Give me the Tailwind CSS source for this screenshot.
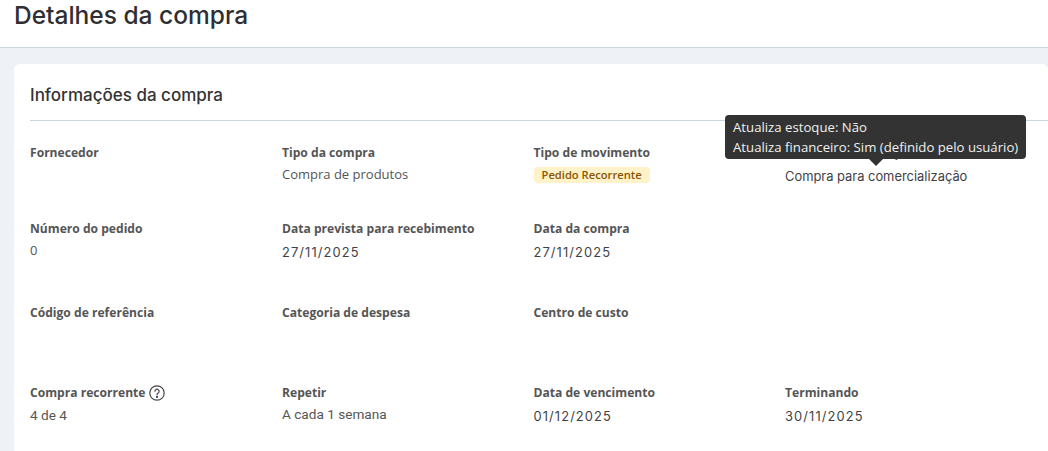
<!DOCTYPE html>
<html lang="pt-BR">
<head>
<meta charset="utf-8">
<title>Detalhes da compra</title>
<script src="https://cdn.jsdelivr.net/npm/@tailwindcss/browser@4"></script>
</head>
<body class="h-[451px] w-[1048px] overflow-hidden bg-[#eef1f6] font-['Open_Sans',sans-serif]">
  <!-- page header -->
  <div class="h-[48px] border-b border-[#cbd5e1] bg-white pl-[14px]">
    <h1 class="font-['Inter',sans-serif] text-[24.5px] leading-[30px] font-medium text-[#2f2f33]">Detalhes da compra</h1>
  </div>

  <div class="pt-4 pl-[14px]">
    <div class="h-[400px] rounded-t-md bg-white pl-4">
      <div class="flex h-[57px] items-center border-b border-[#c9d6de] pt-[7px]">
        <h2 class="font-['Inter',sans-serif] text-[17px] font-medium text-[#333]">Informações da compra</h2>
      </div>

      <div class="grid grid-cols-[252px_251.5px_251.5px_1fr] text-[12.1px] text-[#555]">
        <!-- row 1 -->
        <div class="h-[76px] pt-[23px]">
          <p class="leading-[18px] font-bold">Fornecedor</p>
        </div>
        <div class="pt-[23px]">
          <p class="leading-[18px] font-bold">Tipo da compra</p>
          <p class="mt-[3px] text-[13px] leading-[18px]">Compra de produtos</p>
        </div>
        <div class="pt-[23px]">
          <p class="leading-[18px] font-bold">Tipo de movimento</p>
          <span class="mt-[5px] inline-block rounded-[4px] bg-[#fff2c9] px-2 text-[11.2px] leading-[16px] font-semibold text-[#8a5300]">Pedido Recorrente</span>
        </div>
        <div class="relative pt-[23px]">
          <p class="leading-[18px] font-bold">Finalidade da compra</p>
          <p class="mt-[6px] font-['Inter',sans-serif] text-[12.9px] leading-[18px] text-[#3f3f46]">Compra para comercialização</p>
          <!-- tooltip over the label -->
          <div class="absolute top-[-6px] left-[-60px] h-[44px] w-[301px] rounded-[4px] bg-[#333] px-2 py-[2px] text-[13.2px] leading-[20px] font-medium text-[#f0f0f0]">
            <p>Atualiza estoque: Não</p>
            <p class="whitespace-nowrap">Atualiza financeiro: Sim (definido pelo usuário)</p>
            <span class="absolute top-[44px] left-[144px] h-0 w-0 border-x-[7px] border-t-[7px] border-x-transparent border-t-[#333]"></span>
          </div>
        </div>

        <!-- row 2 -->
        <div class="h-[84px] pt-[23px]">
          <p class="leading-[18px] font-bold">Número do pedido</p>
          <p class="mt-[3px] text-[13px] leading-[18px]">0</p>
        </div>
        <div class="pt-[23px]">
          <p class="leading-[18px] font-bold">Data prevista para recebimento</p>
          <p class="mt-[6px] font-['Inter',sans-serif] text-[12.9px] leading-[18px] tracking-[1.1px] text-[#3f3f46]">27/11/2025</p>
        </div>
        <div class="pt-[23px]">
          <p class="leading-[18px] font-bold">Data da compra</p>
          <p class="mt-[6px] font-['Inter',sans-serif] text-[12.9px] leading-[18px] tracking-[1.1px] text-[#3f3f46]">27/11/2025</p>
        </div>
        <div></div>

        <!-- row 3 -->
        <div class="h-[80px] pt-[23px]">
          <p class="leading-[18px] font-bold">Código de referência</p>
        </div>
        <div class="pt-[23px]">
          <p class="leading-[18px] font-bold">Categoria de despesa</p>
        </div>
        <div class="pt-[23px]">
          <p class="leading-[18px] font-bold">Centro de custo</p>
        </div>
        <div></div>

        <!-- row 4 -->
        <div class="pt-[23px]">
          <p class="flex items-center gap-[4px] leading-[18px] font-bold">
            Compra recorrente
            <svg width="16" height="16" viewBox="0 0 16 16" fill="none" stroke="#444" stroke-width="1.2" stroke-linecap="round">
              <circle cx="8" cy="8" r="7.2"/>
              <path d="M5.9 6.2a2.1 2.1 0 1 1 3.3 1.8c-.8.5-1.2.9-1.2 1.8"/>
              <circle cx="8" cy="11.9" r=".5" fill="#444"/>
            </svg>
          </p>
          <p class="mt-[4px] font-['Roboto',sans-serif] text-[13.6px] leading-[18px]">4 de 4</p>
        </div>
        <div class="pt-[23px]">
          <p class="leading-[18px] font-bold">Repetir</p>
          <p class="mt-[3px] font-['Roboto',sans-serif] text-[13.6px] leading-[18px]">A cada 1 semana</p>
        </div>
        <div class="pt-[23px]">
          <p class="leading-[18px] font-bold">Data de vencimento</p>
          <p class="mt-[6px] font-['Inter',sans-serif] text-[12.9px] leading-[18px] tracking-[1.1px] text-[#3f3f46]">01/12/2025</p>
        </div>
        <div class="pt-[23px]">
          <p class="leading-[18px] font-bold">Terminando</p>
          <p class="mt-[6px] font-['Inter',sans-serif] text-[12.9px] leading-[18px] tracking-[1.1px] text-[#3f3f46]">30/11/2025</p>
        </div>
      </div>
    </div>
  </div>
</body>
</html>
